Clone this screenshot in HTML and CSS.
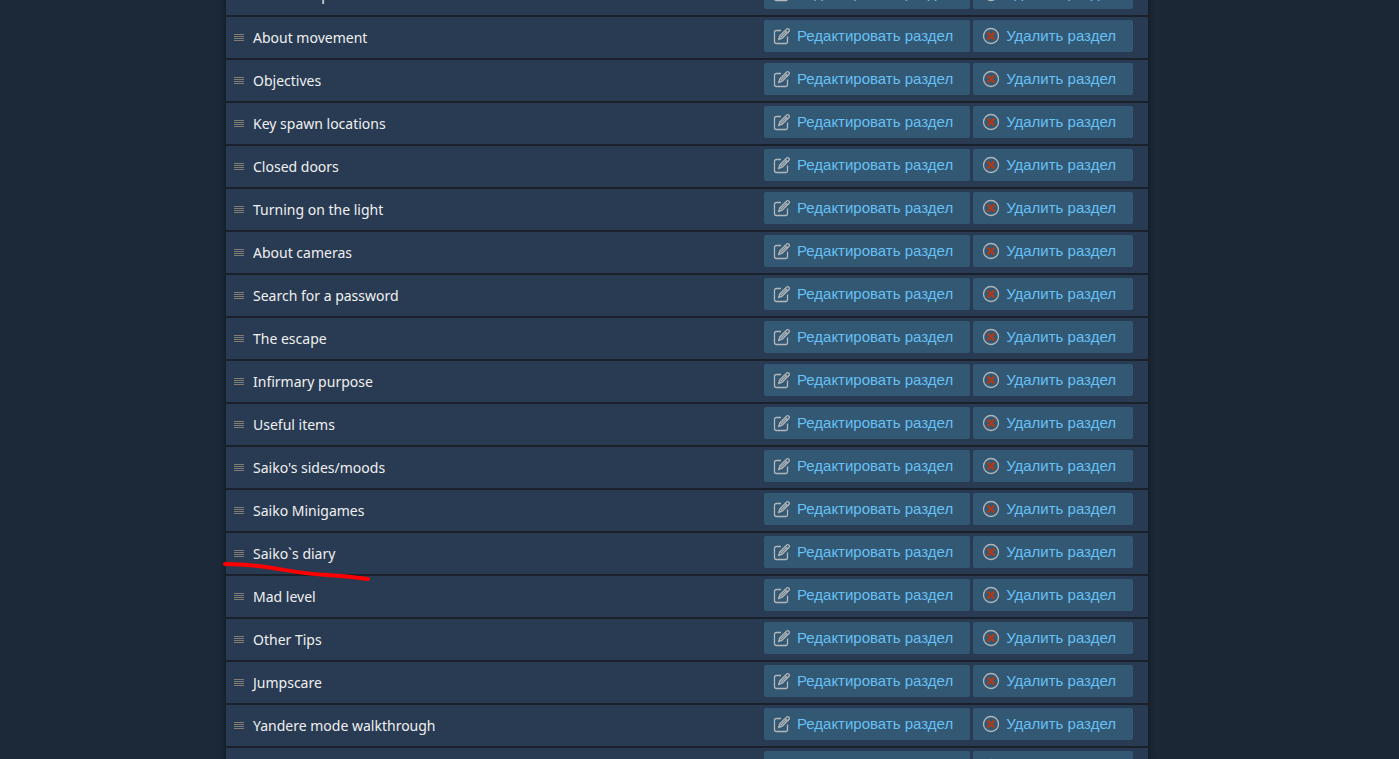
FILE: index.html
```
<!DOCTYPE html>
<html lang="ru">
<head>
<meta charset="utf-8">
<meta name="viewport" content="width=device-width, initial-scale=1">
<title>Разделы руководства</title>
<link rel="stylesheet" href="styles.css">
</head>
<body>
<svg class="sprite" aria-hidden="true">
  <symbol id="edit" viewBox="0 0 18 18">
    <g fill="none" stroke="#b4b7b9" stroke-width="1.3">
      <path d="M8 3.5H3.5Q1.5 3.5 1.5 5.3V14.8Q1.5 16.5 3.5 16.5H13Q14.5 16.5 14.5 14.8V9.5"/>
      <path d="M5.7 12.4L6.8 8.8L13.5 2.1Q14.6 1 15.8 2.2Q17 3.4 15.9 4.5L9.2 11.2ZM12.2 3.4L14.6 5.8M7.6 10.4L13.4 4.6"/>
    </g>
  </symbol>
  <symbol id="delete" viewBox="0 0 18 18">
    <circle cx="9" cy="9" r="7.5" fill="none" stroke="#b0b6ba" stroke-width="1.3"/>
    <path d="M5.4 5.4L12.6 12.6M12.6 5.4L5.4 12.6" stroke="#ae3a1a" stroke-width="2.2"/>
  </symbol>
</svg>
<main class="page">
  <ul class="sections" id="sections"></ul>
  <svg class="mark" viewBox="0 0 150 24" aria-hidden="true"><path d="M3 5C20 5 30 6 44 8C70 12 82 15 105 16C125 17 132 18 146 20" fill="none" stroke="#fe0000" stroke-width="4" stroke-linecap="round"/></svg>
</main>
<script src="sections.js"></script>
</body>
</html>
```
FILE: styles.css
```
body {
  box-sizing: border-box;
  margin: 0;
  padding-right: 25px;
  height: 100vh;
  overflow: hidden;
  background: #1b2838;
  background: linear-gradient(90deg, #1c2938, #1b2735);
  font-family: "Noto Sans", sans-serif;
}
.sprite {
  position: absolute;
  width: 0;
  height: 0;
}
.page {
  position: relative;
  width: 90%;
  max-width: 922px;
  margin: -26px auto 0;
}
.sections {
  list-style: none;
  margin: 0;
  padding: 0;
  background: #1a212b;
  box-shadow: 0 0 5px #10161e;
}
.section {
  display: flex;
  align-items: center;
  gap: 3px;
  height: 41px;
  margin-bottom: 2px;
  padding: 0 15px 0 8px;
  background: #283b52;
}
.grip {
  width: 10px;
  height: 7px;
  margin-right: 6px;
  background: repeating-linear-gradient(#817c76 0 1px, #283b52 1px 2px);
}
.title {
  flex: 1;
  font-size: 14px;
  line-height: 20px;
  color: #f0f0f0;
}
.button {
  display: flex;
  align-items: center;
  gap: 6px;
  height: 32px;
  margin-bottom: 3px;
  padding: 0 17px 0 9px;
  border: 0;
  border-radius: 2px;
  background: #335873;
  color: #67c1f5;
  font: 15px/30px "Liberation Sans", Arial, sans-serif;
}
.icon {
  width: 18px;
  height: 18px;
}
.mark {
  position: absolute;
  top: 585px;
  left: -4px;
  width: 150px;
  height: 24px;
}
```
FILE: sections.js
```
const titles = [
  "School map", "About movement", "Objectives", "Key spawn locations", "Closed doors",
  "Turning on the light", "About cameras", "Search for a password", "The escape",
  "Infirmary purpose", "Useful items", "Saiko's sides/moods", "Saiko Minigames",
  "Saiko`s diary", "Mad level", "Other Tips", "Jumpscare", "Yandere mode walkthrough", ""
];
const button = (icon, label) =>
  `<button class="button" type="button"><svg class="icon" aria-hidden="true"><use href="#${icon}"/></svg><span>${label}</span></button>`;
document.getElementById("sections").innerHTML = titles.map(title =>
  `<li class="section"><span class="grip"></span><span class="title">${title}</span>` +
  button("edit", "Редактировать раздел") + button("delete", "Удалить раздел") + "</li>"
).join("");
```
